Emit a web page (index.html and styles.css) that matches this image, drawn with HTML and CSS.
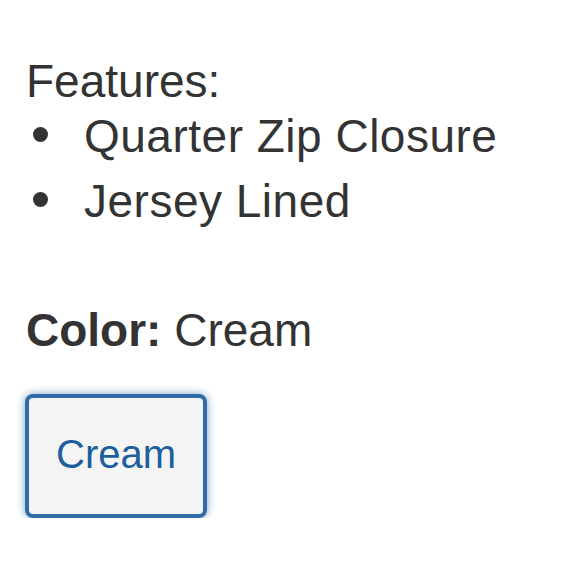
FILE: index.html
```html
<!DOCTYPE html>
<html>
<head>
<meta charset="utf-8">
<link rel="stylesheet" href="styles.css">
</head>
<body>
<div class="product">
  <div class="features-title">Features:</div>
  <ul class="features">
    <li>Quarter Zip Closure</li>
    <li>Jersey Lined</li>
  </ul>
  <div class="color-line"><strong>Color:</strong> Cream</div>
  <div class="swatches">
    <button class="swatch selected">Cream</button>
  </div>
</div>
</body>
</html>
```
FILE: styles.css
```css
html, body {
  margin: 0;
  padding: 0;
  background: #ffffff;
}
body {
  font-family: "Liberation Sans", Arial, sans-serif;
  font-size: 46px;
  line-height: 65px;
  color: #333333;
}
.product {
  padding: 58px 26px 0 26px;
}
.features-title {
  line-height: 46px;
}
.features {
  list-style: none;
  margin: 0;
  padding: 0;
}
.features li {
  display: flex;
  align-items: center;
  letter-spacing: 0.5px;
}
.features li::before {
  content: "";
  flex: none;
  width: 15px;
  height: 15px;
  border-radius: 50%;
  background: #333333;
  margin: 0 36px 4px 7px;
}
.color-line {
  margin-top: 64px;
}
.color-line strong {
  font-weight: 700;
}
.swatches {
  margin-top: 31px;
  display: flex;
}
.swatch {
  font-family: "Liberation Sans", Arial, sans-serif;
  font-size: 40px;
  line-height: 57px;
  color: #1d5f9c;
  background: #f4f4f5;
  border: 4px solid #2f6ba6;
  border-radius: 8px;
  padding: 28px 27px 31px 27px;
  width: 182px;
  height: 124px;
  box-sizing: border-box;
  box-shadow: 0 0 8px rgba(47, 107, 166, 0.65);
  margin: 0 0 0 -1px;
  text-align: center;
}
```
